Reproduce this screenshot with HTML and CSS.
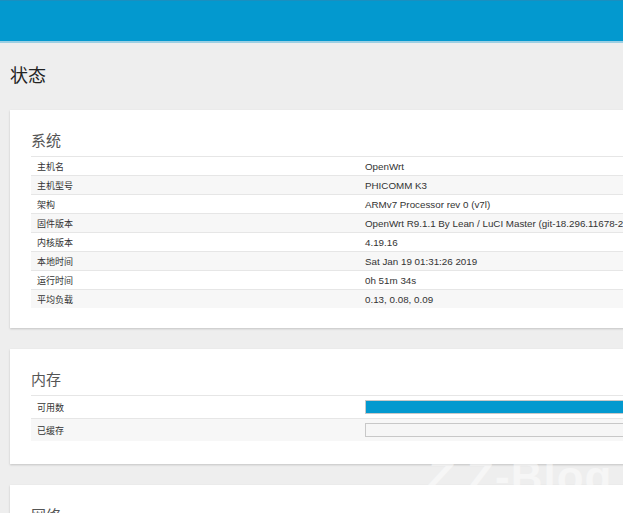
FILE: index.html
```html
<!DOCTYPE html>
<html lang="zh-CN">
<head>
<meta charset="utf-8">
<title>状态</title>
<link rel="stylesheet" href="styles.css">
</head>
<body>
<header class="topbar"></header>
<main class="main">
  <h2 class="page-title">状态</h2>

  <section class="card">
    <h3 class="legend">系统</h3>
    <table class="info">
      <tr><td class="k">主机名</td><td class="v">OpenWrt</td></tr>
      <tr><td class="k">主机型号</td><td class="v">PHICOMM K3</td></tr>
      <tr><td class="k">架构</td><td class="v">ARMv7 Processor rev 0 (v7l)</td></tr>
      <tr><td class="k">固件版本</td><td class="v">OpenWrt R9.1.1 By Lean / LuCI Master (git-18.296.11678-2bbc1b6)</td></tr>
      <tr><td class="k">内核版本</td><td class="v">4.19.16</td></tr>
      <tr><td class="k">本地时间</td><td class="v">Sat Jan 19 01:31:26 2019</td></tr>
      <tr><td class="k">运行时间</td><td class="v">0h 51m 34s</td></tr>
      <tr><td class="k">平均负载</td><td class="v">0.13, 0.08, 0.09</td></tr>
    </table>
  </section>

  <section class="card card-mem">
    <h3 class="legend">内存</h3>
    <table class="info mem">
      <tr><td class="k">可用数</td><td class="v"><div class="bar"><div class="fill" style="width:80%"></div></div></td></tr>
      <tr><td class="k">已缓存</td><td class="v"><div class="bar"><div class="fill" style="width:0%"></div></div></td></tr>
    </table>
  </section>

  <section class="card">
    <h3 class="legend">网络</h3>
  </section>
</main>
<div class="watermark"><span class="wm-z">Z</span> Z-Blog</div>
</body>
</html>
```

FILE: styles.css
```css
html, body {
  margin: 0;
  padding: 0;
}
body {
  background: #eeeeee;
  font-family: "Noto Sans", "Noto Sans CJK SC", sans-serif;
  color: #333;
  overflow: hidden;
  width: 623px;
  height: 513px;
  position: relative;
}
.topbar {
  height: 40px;
  background: #0399cf;
  border-top: 1px solid #1a8fc0;
  border-bottom: 2px solid #9ccfe3;
}
.main {
  width: 900px;
  padding: 0 0 0 10px;
}
.page-title {
  margin: 0;
  padding: 19px 0 0 0;
  height: 48px;
  font-family: "Noto Sans CJK SC", sans-serif;
  font-size: 18px;
  font-weight: normal;
  line-height: 24px;
  color: #222;
}
.card {
  background: #fff;
  box-shadow: 0 1px 2px rgba(0,0,0,0.18);
  padding: 19px 20px 20px 21px;
  margin-bottom: 21px;
}
.legend {
  margin: 0;
  height: 27px;
  font-family: "Noto Sans CJK SC", sans-serif;
  font-size: 15px;
  font-weight: normal;
  line-height: 22px;
  color: #555;
}
.info {
  width: 100%;
  border-collapse: collapse;
  font-size: 9.8px;
  color: #333;
}
.info td {
  height: 18px;
  padding: 0 0 0 6px;
  border-top: 1px solid #e6e6e6;
  vertical-align: middle;
  white-space: nowrap;
}
.info tr:nth-child(even) td {
  background: #f7f7f7;
}
.info td.k {
  width: 328px;
  font-family: "Noto Sans CJK SC", sans-serif;
  font-size: 9px;
}
.info td.v {
  padding-left: 0;
  font-family: "Liberation Sans", "Noto Sans", sans-serif;
}
.mem td {
  height: 22px;
}
.card-mem {
  padding-top: 19px;
  padding-bottom: 23px;
}
.bar {
  height: 12px;
  border: 1px solid #c8c8c8;
  background: #f6f6f6;
}
.fill {
  height: 100%;
  background: #0399cf;
}
.watermark {
  position: absolute;
  left: 426px;
  top: 452px;
  font-family: "Liberation Sans", sans-serif;
  font-weight: bold;
  font-size: 44px;
  color: rgba(255,255,255,0.5);
  letter-spacing: 1px;
  white-space: nowrap;
}
.wm-z {
  font-style: italic;
}
```
